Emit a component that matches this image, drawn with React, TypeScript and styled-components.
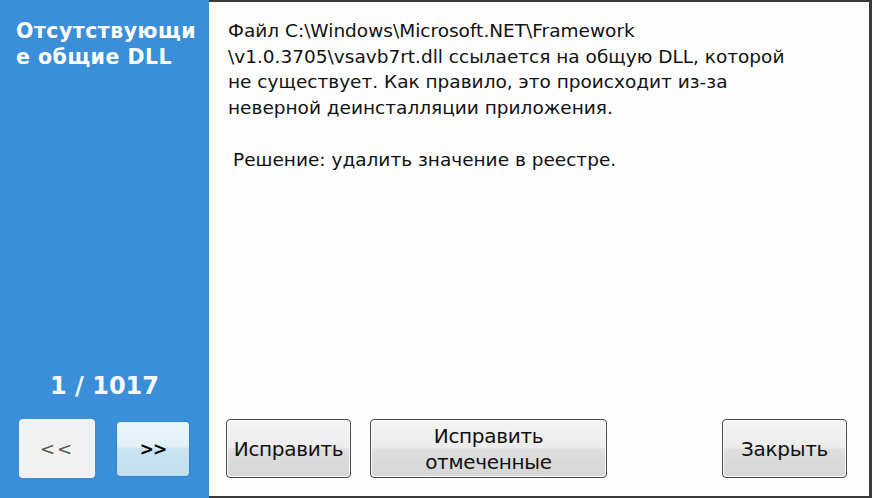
import React from "react";
import styled, { createGlobalStyle } from "styled-components";

const Global = createGlobalStyle`
  html, body { margin: 0; padding: 0; background: #ffffff; }
  body { font-family: "DejaVu Sans", sans-serif; }
`;

const Window = styled.div`
  width: 872px;
  height: 498px;
  display: flex;
  overflow: hidden;
`;

const Side = styled.div`
  width: 209px;
  flex: none;
  background: #3a8fd8;
  display: flex;
  flex-direction: column;
  padding: 18px 0 20px 16px;
  box-sizing: border-box;
`;

const Title = styled.div`
  color: #ffffff;
  font-family: "DejaVu Sans", sans-serif;
  font-weight: bold;
  font-size: 20.5px;
  line-height: 26px;
  width: 184px;
  word-break: break-all;
  letter-spacing: 0.5px;
`;

const Counter = styled.div`
  margin-top: auto;
  color: #f4f8fc;
  font-family: "DejaVu Sans", sans-serif;
  font-weight: bold;
  font-size: 24px;
  text-align: center;
  padding-right: 16px;
  margin-bottom: 19px;
`;

const NavRow = styled.div`
  display: flex;
  gap: 21px;
  padding-left: 3px;
`;

const NavButton = styled.button<{ $active?: boolean }>`
  width: ${(p) => (p.$active ? 74 : 76)}px;
  height: ${(p) => (p.$active ? 56 : 59)}px;
  margin-top: ${(p) => (p.$active ? 2 : 0)}px;
  border-radius: 4px;
  border: ${(p) => (p.$active ? "1px solid #2f84cc" : "none")};
  background: ${(p) =>
    p.$active
      ? "linear-gradient(#eaf5fb 0%, #e2f0f8 45%, #c9e3f2 50%, #c3dfef 100%)"
      : "#f1f1f1"};
  color: ${(p) => (p.$active ? "#000" : "#555")};
  font-family: "DejaVu Sans", sans-serif;
  font-size: ${(p) => (p.$active ? 17 : 18)}px;
  font-weight: ${(p) => (p.$active ? "bold" : "normal")};
  letter-spacing: ${(p) => (p.$active ? -1 : 2)}px;
  padding: 0;
  display: flex;
  align-items: center;
  justify-content: center;
`;

const Main = styled.div`
  flex: 1;
  background: #fdfdfd;
  border-top: 2px solid #3a3a3a;
  border-right: 3px solid #3a3a3a;
  border-bottom: 2px solid #3a3a3a;
  display: flex;
  flex-direction: column;
  padding: 16px 0 18px 17px;
  box-sizing: border-box;
`;

const Message = styled.p`
  margin: 0 0 0 2px;
  font-family: "DejaVu Sans", sans-serif;
  font-size: 18.5px;
  line-height: 25.7px;
  color: #111;
  white-space: nowrap;
`;

const Solution = styled.p`
  margin: 26px 0 0 7px;
  font-family: "DejaVu Sans", sans-serif;
  font-size: 18.5px;
  line-height: 25px;
  color: #111;
`;

const Actions = styled.div`
  margin-top: auto;
  display: flex;
  align-items: center;
`;

const ActionButton = styled.button<{ $w: number; $ml?: number }>`
  width: ${(p) => p.$w}px;
  height: 59px;
  margin-left: ${(p) => p.$ml ?? 0}px;
  border: 1px solid #4a4a4a;
  border-radius: 4px;
  background: linear-gradient(#f4f4f4 0%, #ececec 48%, #dedede 52%, #d6d6d6 100%);
  box-shadow: inset 0 0 0 1px #fbfbfb;
  font-family: "DejaVu Sans", sans-serif;
  font-size: 20px;
  line-height: 26px;
  color: #111;
  letter-spacing: -0.3px;
  padding: 0;
  display: flex;
  align-items: center;
  justify-content: center;
  text-align: center;
`;

export default function App() {
  return (
    <>
      <Global />
      <Window>
        <Side>
          <Title>Отсутствующие общие DLL</Title>
          <Counter>1 / 1017</Counter>
          <NavRow>
            <NavButton>&lt;&lt;</NavButton>
            <NavButton $active>&gt;&gt;</NavButton>
          </NavRow>
        </Side>
        <Main>
          <Message>
            Файл C:\Windows\Microsoft.NET\Framework
            <br />
            \v1.0.3705\vsavb7rt.dll ссылается на общую DLL, которой
            <br />
            не существует. Как правило, это происходит из-за
            <br />
            неверной деинсталляции приложения.
          </Message>
          <Solution>Решение: удалить значение в реестре.</Solution>
          <Actions>
            <ActionButton $w={125}>Исправить</ActionButton>
            <ActionButton $w={237} $ml={19}>
              Исправить
              <br />
              отмеченные
            </ActionButton>
            <ActionButton $w={125} $ml={115}>
              Закрыть
            </ActionButton>
          </Actions>
        </Main>
      </Window>
    </>
  );
}
